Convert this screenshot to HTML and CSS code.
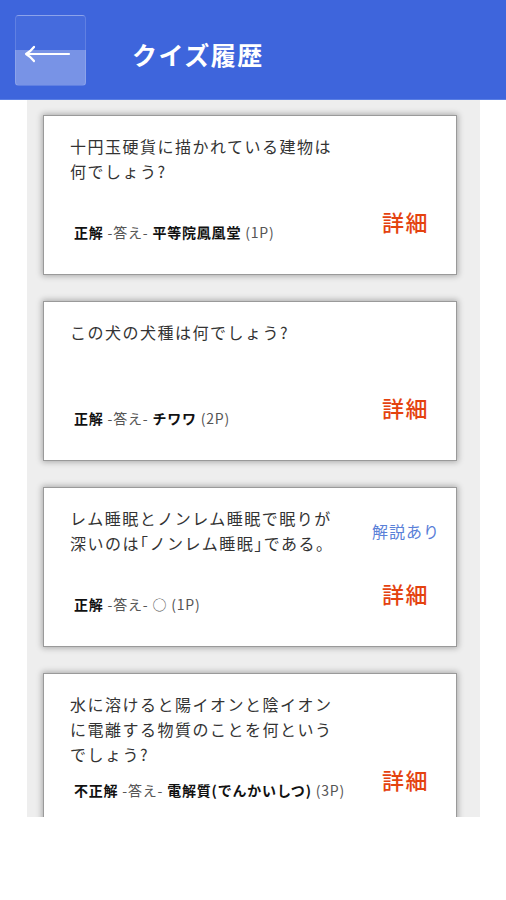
FILE: index.html
```html
<!DOCTYPE html>
<html>
<head>
	<meta charset="UTF-8">
	<link rel="stylesheet" href="styles.css">
</head>
<body>
	<div id="header">
		<button id="backbtn">
			<svg width="48" height="20" viewBox="0 0 48 20">
				<path d="M3 10 H46 M3 10 Q8 7 11 3 M3 10 Q8 13 11 17" fill="none" stroke="#fff" stroke-width="2.2" stroke-linecap="round" stroke-linejoin="round"/>
			</svg>
		</button>
		<h1 id="title">クイズ履歴</h1>
	</div>
	<div id="history">
		<div class="card">
			<div class="main">
				<p class="question">十円玉硬貨に描かれている建物は何でしょう?</p>
				<p class="result"><b>正解</b> -答え- <b>平等院鳳凰堂</b> (1P)</p>
			</div>
			<div class="side">
				<a class="detail" href="#">詳細</a>
			</div>
		</div>
		<div class="card">
			<div class="main">
				<p class="question">この犬の犬種は何でしょう?</p>
				<p class="result"><b>正解</b> -答え- <b>チワワ</b> (2P)</p>
			</div>
			<div class="side">
				<a class="detail" href="#">詳細</a>
			</div>
		</div>
		<div class="card">
			<div class="main">
				<p class="question">レム睡眠とノンレム睡眠で眠りが深いのは｢ノンレム睡眠｣である。</p>
				<p class="result"><b>正解</b> -答え- ○ (1P)</p>
			</div>
			<div class="side">
				<span class="note">解説あり</span>
				<a class="detail" href="#">詳細</a>
			</div>
		</div>
		<div class="card">
			<div class="main">
				<p class="question">水に溶けると陽イオンと陰イオンに電離する物質のことを何というでしょう?</p>
				<p class="result"><b>不正解</b> -答え- <b>電解質(でんかいしつ)</b> (3P)</p>
			</div>
			<div class="side">
				<a class="detail" href="#">詳細</a>
			</div>
		</div>
	</div>
</body>
</html>
```

FILE: styles.css
```css
body {
	background: white;
	margin: 0px;
	font-family: "Noto Sans CJK JP", "Liberation Sans", sans-serif;
}

div#header {
	height: 100px;
	background: #3e65dc;
	border-bottom: 1px solid #5a7fe4;
	box-sizing: border-box;
	display: flex;
	align-items: center;
	padding-left: 15px;
}

button#backbtn {
	width: 71px;
	height: 71px;
	border: 1px solid rgba(255, 255, 255, 0.15);
	border-radius: 4px;
	background: linear-gradient(rgba(255, 255, 255, 0.04) 50%, rgba(255, 255, 255, 0.3) 50%);
	display: flex;
	align-items: center;
	justify-content: center;
	padding: 0 0 0 2px;
	margin-top: 1px;
	cursor: pointer;
	outline: none;
}

	button#backbtn svg {
		margin-top: 8px;
		margin-right: 10px;
	}

h1#title {
	margin: 8px 0 0 46px;
	color: white;
	font-size: 25px;
	font-weight: bold;
	letter-spacing: 1.5px;
}

div#history {
	margin-left: 27px;
	width: 453px;
	height: 717px;
	overflow: hidden;
	background: #eeeeee;
	padding: 15px 23px 0 16px;
	box-sizing: border-box;
	display: flex;
	flex-direction: column;
	gap: 26px;
}

div.card {
	flex-shrink: 0;
	min-height: 160px;
	box-sizing: border-box;
	background: white;
	border: 1px solid #9a9a9a;
	box-shadow: 0 0 6px 1px rgba(0, 0, 0, 0.3);
	padding: 18px 26px 20px 26px;
	display: flex;
}

div.main {
	width: 272px;
}

p.question {
	margin: 0;
	min-height: 90px;
	font-size: 16px;
	line-height: 25px;
	letter-spacing: 1.5px;
	color: #333;
}

p.result {
	margin: 0 0 0 4px;
	font-size: 14px;
	line-height: 16px;
	letter-spacing: 0.8px;
	color: #555;
	white-space: nowrap;
}

	p.result b {
		color: #111;
	}

div.side {
	flex: 1;
	display: grid;
	grid-template-rows: 20px auto;
	justify-items: end;
	padding-top: 15px;
}

span.note {
	grid-row: 1;
	font-size: 16px;
	line-height: 20px;
	color: #5a80d8;
	letter-spacing: 1px;
	margin-right: -10px;
}

a.detail {
	grid-row: 2;
	margin-top: 38px;
	margin-right: 1px;
	font-size: 22px;
	font-weight: 500;
	line-height: 28px;
	letter-spacing: 1.5px;
	color: #e4420f;
	text-decoration: none;
}
```
